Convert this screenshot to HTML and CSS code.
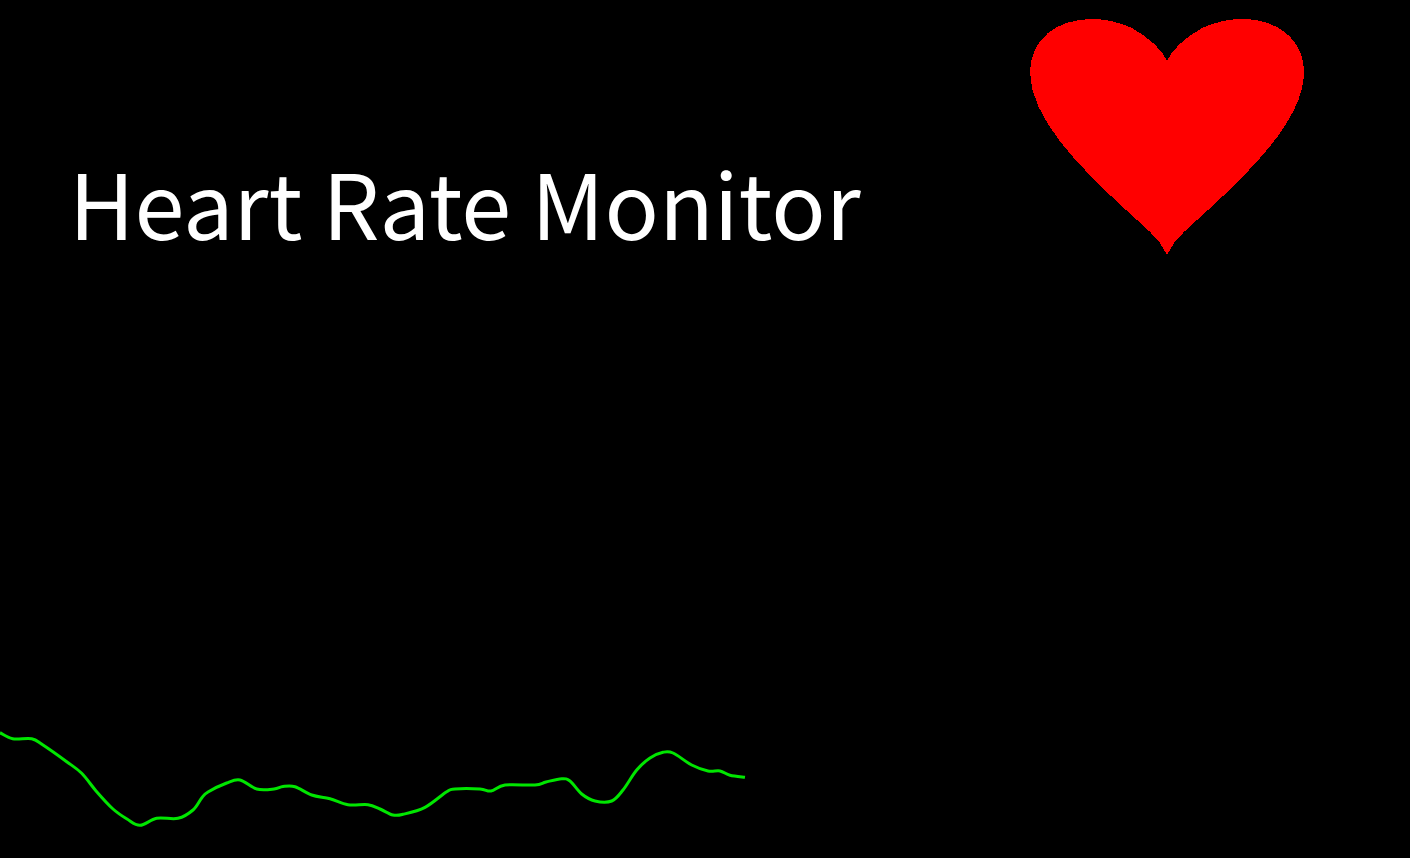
FILE: index.html
```html
<!DOCTYPE html>
<html lang="en">
<head>
    <meta charset="UTF-8">
    <meta name="viewport" content="width=device-width, initial-scale=1.0">
    <title>Heart Rate Monitor</title>
    <link rel="stylesheet" href="styles.css">
</head>
<body>

    <div class="top">
        <h1 class="title">Heart Rate Monitor</h1>
        <svg class="heart" viewBox="0 0 276 240" width="276" height="240">
            <path d="M138 44C133 33 122 22 103 11C90 5 76 2 63 2C27 2 1 23 1 55C1 100 50 150 97 193C115 210 130 220 138 238C146 220 161 210 179 193C226 150 275 100 275 55C275 23 249 2 213 2C200 2 186 5 173 11C154 22 143 33 138 44Z"/>
        </svg>
    </div>

    <!-- pulse trace, drawn by script.js -->
    <svg class="trace" viewBox="0 728 1410 130" width="1410" height="130">
        <path id="tracePath"/>
    </svg>

    <script src="script.js"></script>
</body>
</html>
```

FILE: styles.css
```css
html, body {
    height: 100%;
}
body {
    margin: 0;
    background-color: #000;
    color: #fff;
    font-family: "Noto Sans CJK SC", "Noto Sans", sans-serif;
    display: flex;
    flex-direction: column;
    justify-content: space-between;
    overflow: hidden;
}
.top {
    display: flex;
    justify-content: space-between;
    align-items: flex-start;
    padding: 17px 105px 0 69px;
}
.title {
    margin: 134px 0 0;
    font-size: 90px;
    font-weight: 400;
    line-height: 100px;
}
.heart {
    display: block;
    shape-rendering: crispEdges;
}
.heart path {
    fill: #f00;
}
.trace {
    display: block;
}
.trace path {
    fill: none;
    stroke: #00e600;
    stroke-width: 3;
    stroke-linejoin: round;
}
```

FILE: script.js
```js
const readings = [
    [0, 732.7], [12.7, 738.7], [31.7, 738.7], [43, 745], [66.7, 761.7], [81.7, 773.3],
    [96.7, 791.7], [113, 809], [127, 819], [140, 825.3], [156.7, 818.3], [178, 818.3],
    [193, 810], [201.7, 798], [208, 792], [226.7, 783], [240, 780], [256.7, 789],
    [274, 789], [283, 786.5], [295, 786.7], [311.7, 795], [330, 798.7], [348, 804.7],
    [368, 804.7], [380, 809], [393, 815], [403, 814.3], [425, 807.3], [446.7, 791.7],
    [455, 789], [480, 789], [491, 791], [505, 785], [535, 785],
    [546, 782], [561.7, 778.7], [570, 781], [581.7, 794], [595, 801], [611.7, 801],
    [623, 790], [636.7, 770], [650, 758], [663, 752.3], [673, 753], [691.7, 765],
    [708, 771], [720, 771], [730, 775.3], [745, 777.3]
];

// smooth line through all the readings
function tracePath(pts) {
    let d = `M${pts[0][0]} ${pts[0][1]}`;
    for (let i = 0; i < pts.length - 1; i++) {
        const p0 = pts[i - 1] || pts[i];
        const p1 = pts[i];
        const p2 = pts[i + 1];
        const p3 = pts[i + 2] || p2;
        const c1x = p1[0] + (p2[0] - p0[0]) / 6;
        const c1y = p1[1] + (p2[1] - p0[1]) / 6;
        const c2x = p2[0] - (p3[0] - p1[0]) / 6;
        const c2y = p2[1] - (p3[1] - p1[1]) / 6;
        d += `C${c1x} ${c1y} ${c2x} ${c2y} ${p2[0]} ${p2[1]}`;
    }
    return d;
}

document.getElementById('tracePath').setAttribute('d', tracePath(readings));
```
